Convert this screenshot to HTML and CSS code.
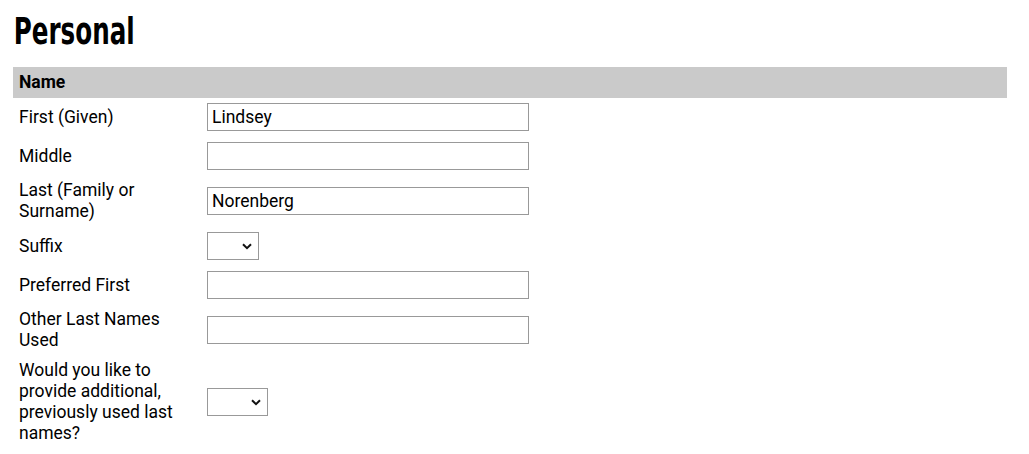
FILE: index.html
```html
<!DOCTYPE html>
<html lang="en">
<head>
<meta charset="utf-8">
<title>Personal</title>
<link rel="stylesheet" href="styles.css">
</head>
<body>
<main class="page">
  <h1 class="title">Personal</h1>
  <table class="form">
    <thead>
      <tr><th colspan="2" class="section">Name</th></tr>
    </thead>
    <tbody>
      <tr>
        <td class="label">First (Given)</td>
        <td class="field"><input class="text" type="text" value="Lindsey"></td>
      </tr>
      <tr>
        <td class="label">Middle</td>
        <td class="field"><input class="text" type="text" value=""></td>
      </tr>
      <tr>
        <td class="label">Last (Family or Surname)</td>
        <td class="field"><input class="text" type="text" value="Norenberg"></td>
      </tr>
      <tr>
        <td class="label">Suffix</td>
        <td class="field">
          <span class="pick-wrap pick-sm">
            <select class="pick"><option></option><option>Jr</option><option>Sr</option><option>II</option><option>III</option></select>
            <svg class="chev" width="10" height="7" viewBox="0 0 10 7" aria-hidden="true"><path d="M1 1.2 L5 5.2 L9 1.2" fill="none" stroke="#111" stroke-width="2"/></svg>
          </span>
        </td>
      </tr>
      <tr>
        <td class="label">Preferred First</td>
        <td class="field"><input class="text" type="text" value=""></td>
      </tr>
      <tr>
        <td class="label">Other Last Names Used</td>
        <td class="field"><input class="text" type="text" value=""></td>
      </tr>
      <tr>
        <td class="label">Would you like to provide additional, previously used last names?</td>
        <td class="field">
          <span class="pick-wrap pick-md">
            <select class="pick"><option></option><option>Yes</option><option>No</option></select>
            <svg class="chev" width="10" height="7" viewBox="0 0 10 7" aria-hidden="true"><path d="M1 1.2 L5 5.2 L9 1.2" fill="none" stroke="#111" stroke-width="2"/></svg>
          </span>
        </td>
      </tr>
    </tbody>
  </table>
</main>
</body>
</html>
```

FILE: styles.css
```css
html, body {
  margin: 0;
  padding: 0;
  background: #ffffff;
}

body {
  font-family: Roboto, "Liberation Sans", Arial, sans-serif;
  font-size: 17.5px;
  color: #000000;
}

.page {
  padding: 0 22px 0 13px;
}

.title {
  margin: 0;
  padding: 9px 0 0 1px;
  height: 67px;
  box-sizing: border-box;
  font-family: "Liberation Sans Narrow", "DejaVu Sans Condensed", "Liberation Sans", sans-serif;
  font-weight: 700;
  font-size: 38px;
  line-height: 44px;
  letter-spacing: 0;
  transform: scaleX(0.72);
  transform-origin: left top;
  white-space: nowrap;
}

.form {
  width: 100%;
  border-collapse: collapse;
  border-spacing: 0;
}

.section {
  background: #cacaca;
  text-align: left;
  font-weight: 700;
  font-size: 17.5px;
  height: 31px;
  padding: 0 6px;
  line-height: 21px;
  vertical-align: middle;
}

.label {
  width: 176px;
  padding: 4px 6px 5px;
  line-height: 21px;
  vertical-align: middle;
}

.field {
  padding: 4px 6px 5px;
  vertical-align: middle;
}

.text {
  display: block;
  box-sizing: border-box;
  width: 322px;
  height: 28px;
  margin: 1px 0;
  padding: 0 4px;
  border: 1px solid #999999;
  border-radius: 0;
  background: #ffffff;
  font-family: Roboto, "Liberation Sans", Arial, sans-serif;
  font-size: 17.5px;
  color: #000000;
  outline: none;
}

.pick-wrap {
  position: relative;
  display: block;
  height: 28px;
  margin: 1px 0;
}

.pick {
  display: block;
  box-sizing: border-box;
  width: 100%;
  height: 28px;
  margin: 0;
  padding: 0 4px;
  border: 1px solid #999999;
  border-radius: 0;
  background-color: #ffffff;
  -webkit-appearance: none;
  appearance: none;
  font-family: Roboto, "Liberation Sans", Arial, sans-serif;
  font-size: 17.5px;
  color: #000000;
  outline: none;
}

.chev {
  position: absolute;
  right: 7px;
  top: 11px;
  pointer-events: none;
}

.pick-sm {
  width: 52px;
}

.pick-md {
  width: 61px;
}
```
